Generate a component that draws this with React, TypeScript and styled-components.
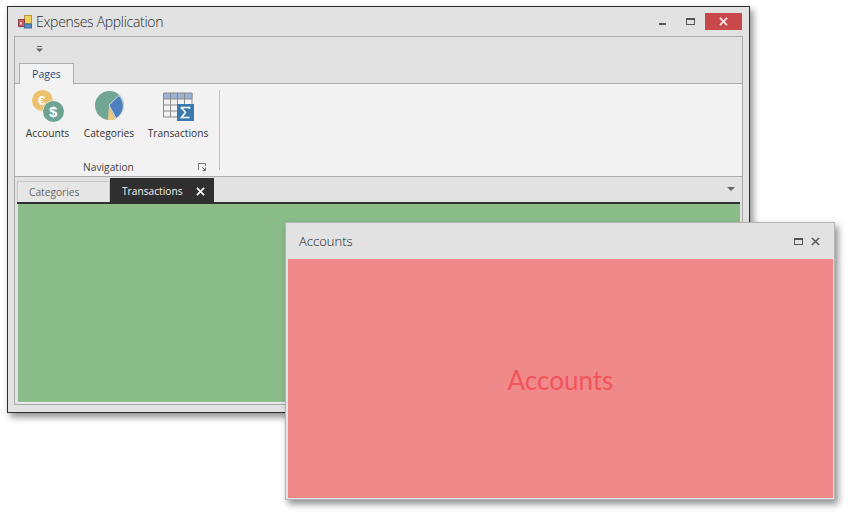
import React from "react";
import styled, { createGlobalStyle } from "styled-components";

const GlobalStyle = createGlobalStyle`
  html, body {
    margin: 0;
    padding: 0;
    background: #fff;
    font-family: "Open Sans", "Noto Sans", "Liberation Sans", sans-serif;
  }
`;

const Desktop = styled.div`
  position: relative;
  width: 848px;
  height: 514px;
  overflow: hidden;
`;

const MainWindow = styled.div`
  position: absolute;
  left: 7px;
  top: 6px;
  width: 743px;
  height: 407px;
  box-sizing: border-box;
  border: 1px solid #2e2e2e;
  background: #e2e2e2;
  box-shadow: 3px 4px 7px rgba(0, 0, 0, 0.45);
  display: flex;
  flex-direction: column;
  padding: 0 6px 7px 6px;
`;

const TitleBar = styled.div`
  height: 29px;
  flex: none;
  display: flex;
  align-items: center;
  padding: 0 1px 0 3px;
  gap: 3px;
`;

const TitleText = styled.span`
  font-size: 14px;
  font-weight: 300;
  letter-spacing: -0.3px;
  color: #2b2b2b;
  flex: 1;
`;

const WinButton = styled.button`
  width: 24px;
  height: 17px;
  margin: 0;
  padding: 0;
  border: 0;
  background: none;
  display: flex;
  align-items: center;
  justify-content: center;
`;

const CloseButton = styled(WinButton)`
  width: 37px;
  background: #c9494a;
`;

const Frame = styled.div`
  flex: 1;
  min-height: 0;
  border: 1px solid #ababab;
  display: flex;
  flex-direction: column;
`;

const QuickBar = styled.div`
  height: 25px;
  flex: none;
  display: flex;
  align-items: center;
  padding: 0 0 2px 21px;
  box-sizing: border-box;
`;

const RibbonTabs = styled.div`
  height: 21px;
  flex: none;
  display: flex;
  align-items: flex-end;
  padding-left: 4px;
  border-bottom: 1px solid #ababab;
`;

const RibbonTab = styled.div`
  width: 55px;
  height: 21px;
  box-sizing: border-box;
  margin-bottom: -1px;
  background: #f2f2f2;
  border: 1px solid #ababab;
  border-bottom: 0;
  color: #1f4a7c;
  font-size: 10.5px;
  display: flex;
  align-items: center;
  justify-content: center;
`;

const RibbonBody = styled.div`
  height: 93px;
  flex: none;
  box-sizing: border-box;
  background: #f2f2f2;
  border-bottom: 1px solid #ababab;
  display: flex;
  padding: 5px 0 2px 0;
`;

const RibbonGroup = styled.div`
  width: 205px;
  box-sizing: border-box;
  display: flex;
  flex-direction: column;
  position: relative;
  &::after {
    content: "";
    position: absolute;
    right: 0;
    top: 1px;
    bottom: 4px;
    width: 1px;
    background: #c4c4c4;
  }
`;

const Commands = styled.div`
  display: flex;
  flex: 1;
  padding-left: 5px;
`;

const Command = styled.div<{ $w: number }>`
  width: ${(p) => p.$w}px;
  flex: none;
  display: flex;
  flex-direction: column;
  align-items: center;
  font-size: 10.2px;
  color: #333;
`;

const CommandIcon = styled.div`
  height: 33px;
  margin-bottom: 4px;
  display: flex;
  align-items: center;
  justify-content: center;
`;

const GroupLabel = styled.div`
  font-size: 10.2px;
  color: #444;
  text-align: center;
  padding-right: 18px;
  line-height: 13px;
`;

const GroupExpander = styled.svg`
  position: absolute;
  right: 14px;
  bottom: 3px;
`;

const DocTabs = styled.div`
  height: 25px;
  flex: none;
  margin: 0 2px;
  display: flex;
  align-items: flex-end;
  border-bottom: 2px solid #2f2f2f;
  position: relative;
`;

const DocTab = styled.div`
  width: 93px;
  height: 21px;
  box-sizing: border-box;
  background: #e6e6e6;
  border: 1px solid #c6c6c6;
  border-bottom: 0;
  color: #666;
  font-size: 10.2px;
  padding-left: 11px;
  line-height: 21px;
`;

const DocTabActive = styled.div`
  width: 104px;
  height: 24px;
  background: #2f2f2f;
  color: #f4f4f4;
  font-size: 10.2px;
  display: flex;
  align-items: center;
  justify-content: space-between;
  padding: 2px 9px 0 12px;
  box-sizing: border-box;
`;

const DocMenu = styled.div`
  position: absolute;
  right: 5px;
  top: 10px;
  width: 0;
  height: 0;
  border-left: 4px solid transparent;
  border-right: 4px solid transparent;
  border-top: 4px solid #666;
`;

const GreenPane = styled.div`
  flex: 1;
  margin: 0 2px 1px 3px;
  background: #8bbd8b;
  border-bottom: 1px solid #f0f0f0;
`;

const FloatWindow = styled.div`
  position: absolute;
  left: 285px;
  top: 222px;
  width: 550px;
  height: 278px;
  box-sizing: border-box;
  border: 1px solid #b4b4b4;
  background: #e2e2e2;
  box-shadow: 3px 4px 7px rgba(0, 0, 0, 0.45);
  display: flex;
  flex-direction: column;
  padding: 0 1px 1px 2px;
`;

const FloatTitle = styled.div`
  height: 36px;
  flex: none;
  display: flex;
  align-items: center;
  padding: 0 13px 0 11px;
  font-size: 13px;
  font-weight: 300;
  color: #222;
`;

const FloatName = styled.span`
  flex: 1;
`;

const FloatActions = styled.div`
  display: flex;
  align-items: center;
  gap: 8px;
`;

const RedPane = styled.div`
  flex: 1;
  background: #f08a8a;
  display: flex;
  align-items: center;
  justify-content: center;
  color: #f3545a;
  font-family: "Lato", "Open Sans", sans-serif;
  font-size: 26px;
  padding-top: 2px;
`;

const AppIcon = () => (
  <svg width="16" height="16" viewBox="0 0 16 16">
    <rect x="7.5" y="1.5" width="7" height="8" fill="#f3cf5e" stroke="#b8983c" />
    <rect x="1.5" y="5.5" width="6" height="7" fill="#d65558" stroke="#8a4446" />
    <rect x="3" y="8" width="2" height="2.5" fill="#f3d0d0" />
    <rect x="7.5" y="10" width="7" height="4" fill="#5b8cc6" stroke="#40699a" />
    <rect x="2" y="13" width="5" height="2" fill="#c9d8ea" />
  </svg>
);

const AccountsIcon = () => (
  <svg width="32" height="32" viewBox="0 0 32 32">
    <circle cx="10.5" cy="10.5" r="10.5" fill="#eec16e" />
    <text x="6" y="15" fontSize="13" fontWeight="700" fill="#fff" fontFamily="Liberation Sans, sans-serif">€</text>
    <circle cx="21.5" cy="21.5" r="11" fill="#f2f2f2" />
    <circle cx="21.5" cy="21.5" r="10.5" fill="#6ea394" />
    <text x="17" y="27" fontSize="15" fontWeight="700" fill="#fff" fontFamily="Liberation Sans, sans-serif">$</text>
  </svg>
);

const CategoriesIcon = () => (
  <svg width="29" height="29" viewBox="0 0 29 29">
    <circle cx="14.5" cy="14.5" r="14.5" fill="#71a594" />
    <path d="M14 14 L24 4.5 A14.5 14.5 0 0 1 21 27.5 Z" fill="#4e7fbe" stroke="#f2f2f2" strokeWidth="0.8" />
    <path d="M14 15 L20.5 27.7 A14.5 14.5 0 0 1 13 29 Z" fill="#eec77f" />
  </svg>
);

const TransactionsIcon = () => (
  <svg width="31" height="31" viewBox="0 0 31 31">
    <rect x="0.5" y="3" width="29" height="6" fill="#9db3d2" />
    <path
      d="M0.5 3H29V14 M0.5 3V27H14 M0.5 9H29 M0.5 15H14 M0.5 21H14 M7.5 3V27 M14.5 3V27 M21.5 3V14"
      fill="none"
      stroke="#8b8b8b"
      strokeWidth="1"
    />
    <rect x="14" y="14" width="17" height="17" fill="#3b78ad" />
    <path d="M18.5 19V17.5H26.5V19 M26.5 27.5H18.5L22.5 22.5L18.5 17.5" fill="none" stroke="#fff" strokeWidth="1.6" />
  </svg>
);

const CloseGlyph = ({ size, color, width }: { size: number; color: string; width: number }) => (
  <svg width={size} height={size} viewBox="0 0 10 10">
    <path d="M1 1L9 9M9 1L1 9" stroke={color} strokeWidth={width} fill="none" />
  </svg>
);

const MaxGlyph = ({ w, h }: { w: number; h: number }) => (
  <svg width={w} height={h} viewBox={`0 0 ${w} ${h}`}>
    <rect x="0.5" y="0.5" width={w - 1} height={h - 1} fill="none" stroke="#555" />
    <rect x="0" y="0" width={w} height="2" fill="#555" />
  </svg>
);

export default function App() {
  return (
    <Desktop>
      <GlobalStyle />
      <MainWindow>
        <TitleBar>
          <AppIcon />
          <TitleText>Expenses Application</TitleText>
          <WinButton>
            <svg width="8" height="8" viewBox="0 0 8 8">
              <rect x="0" y="5" width="7" height="2" fill="#555" />
            </svg>
          </WinButton>
          <WinButton>
            <MaxGlyph w={9} h={7} />
          </WinButton>
          <CloseButton>
            <CloseGlyph size={9} color="#f7e3e3" width={2} />
          </CloseButton>
        </TitleBar>
        <Frame>
          <QuickBar>
            <svg width="7" height="6" viewBox="0 0 7 6">
              <rect x="1" y="0" width="5" height="1" fill="#666" />
              <path d="M0 2.5H7L3.5 6Z" fill="#666" />
            </svg>
          </QuickBar>
          <RibbonTabs>
            <RibbonTab>Pages</RibbonTab>
          </RibbonTabs>
          <RibbonBody>
            <RibbonGroup>
              <Commands>
                <Command $w={55}>
                  <CommandIcon>
                    <AccountsIcon />
                  </CommandIcon>
                  Accounts
                </Command>
                <Command $w={68}>
                  <CommandIcon>
                    <CategoriesIcon />
                  </CommandIcon>
                  Categories
                </Command>
                <Command $w={70}>
                  <CommandIcon>
                    <TransactionsIcon />
                  </CommandIcon>
                  Transactions
                </Command>
              </Commands>
              <GroupLabel>Navigation</GroupLabel>
              <GroupExpander width="8" height="8" viewBox="0 0 8 8">
                <path d="M0.5 7V0.5H7.5V3 M4 4L7.5 7.5 M7.5 4.5V7.5H4.5" stroke="#777" fill="none" />
              </GroupExpander>
            </RibbonGroup>
          </RibbonBody>
          <DocTabs>
            <DocTab>Categories</DocTab>
            <DocTabActive>
              Transactions
              <CloseGlyph size={9} color="#f4f4f4" width={2} />
            </DocTabActive>
            <DocMenu />
          </DocTabs>
          <GreenPane />
        </Frame>
      </MainWindow>
      <FloatWindow>
        <FloatTitle>
          <FloatName>Accounts</FloatName>
          <FloatActions>
            <MaxGlyph w={9} h={7} />
            <CloseGlyph size={9} color="#555" width={1.6} />
          </FloatActions>
        </FloatTitle>
        <RedPane>Accounts</RedPane>
      </FloatWindow>
    </Desktop>
  );
}
